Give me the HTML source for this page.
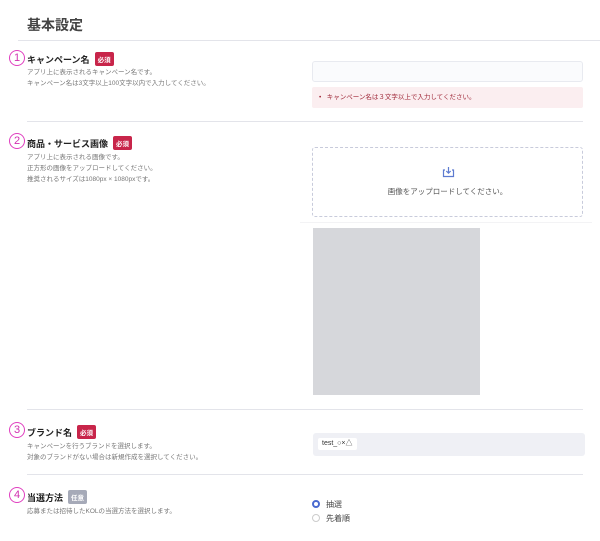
<!DOCTYPE html>
<html><head><meta charset="utf-8"><style>
*{margin:0;padding:0;box-sizing:border-box}
body{width:600px;height:541px;background:#fff;font-family:"Liberation Sans","Noto Sans CJK JP",sans-serif;position:relative;overflow:hidden;color:#333}
.a{position:absolute}
.title{left:27px;top:15px;font-size:14px;font-weight:bold;color:#444}
.hr{height:1px;background:#e3e4ea}
.num{width:16px;height:16px;border:1px solid #e040c0;border-radius:50%;color:#d030b0;font-size:11px;text-align:center;line-height:14px}
.h{font-size:9px;font-weight:bold;color:#222;white-space:nowrap}
.badge{display:inline-block;background:#c8254a;color:#fff;font-size:6.5px;padding:2px 3px;border-radius:2px;margin-left:5px;vertical-align:1px}
.badge.g{background:#a6aab8}
.d{font-size:6.5px;color:#777;line-height:11px;white-space:nowrap}
</style></head><body>
<div class="a title">基本設定</div>
<div class="a hr" style="left:18px;top:40px;width:582px"></div>

<div class="a num" style="left:9px;top:50px">1</div>
<div class="a h" style="left:27px;top:52px">キャンペーン名<span class="badge">必須</span></div>
<div class="a d" style="left:27px;top:67px">アプリ上に表示されるキャンペーン名です。<br>キャンペーン名は3文字以上100文字以内で入力してください。</div>
<div class="a" style="left:312px;top:61px;width:271px;height:21px;border:1px solid #e8eaf0;border-radius:3px;background:#fafbfd"></div>
<div class="a" style="left:312px;top:87px;width:271px;height:21px;background:#fbeef0;border-radius:2px;font-size:6.5px;color:#a02a3a;line-height:21px;padding-left:7px">•&nbsp;&nbsp;&nbsp;キャンペーン名は３文字以上で入力してください。</div>
<div class="a hr" style="left:27px;top:121px;width:556px"></div>

<div class="a num" style="left:9px;top:133px">2</div>
<div class="a h" style="left:27px;top:136px">商品・サービス画像<span class="badge">必須</span></div>
<div class="a d" style="left:27px;top:152px">アプリ上に表示される画像です。<br>正方形の画像をアップロードしてください。<br>推奨されるサイズは1080px × 1080pxです。</div>
<div class="a" style="left:312px;top:147px;width:271px;height:70px;border:1px dashed #c8cbdb;border-radius:3px"></div>
<svg class="a" style="left:442px;top:166px" width="13" height="12" viewBox="0 0 13 12"><path d="M3 4H1.5v6.5h10V4H10" fill="none" stroke="#5d7bd0" stroke-width="1.2"/><path d="M6.5 1v6M4.3 5l2.2 2.2L8.7 5" fill="none" stroke="#5d7bd0" stroke-width="1.2"/></svg>
<div class="a" style="left:312px;top:186px;width:271px;text-align:center;font-size:7.5px;color:#555">画像をアップロードしてください。</div>
<div class="a" style="left:300px;top:222px;width:292px;height:1px;background:#f3f3f5"></div>
<div class="a" style="left:313px;top:228px;width:167px;height:167px;background:#d6d7db"></div>
<div class="a hr" style="left:27px;top:409px;width:556px"></div>

<div class="a num" style="left:9px;top:422px">3</div>
<div class="a h" style="left:27px;top:425px">ブランド名<span class="badge">必須</span></div>
<div class="a d" style="left:27px;top:441px">キャンペーンを行うブランドを選択します。<br>対象のブランドがない場合は新規作成を選択してください。</div>
<div class="a" style="left:313px;top:433px;width:272px;height:23px;background:#eff0f5;border-radius:3px"></div>
<div class="a" style="left:318px;top:438px;height:12px;padding:0 4px;background:#fff;border-radius:2px;font-size:7px;line-height:12px;color:#333">test_○×△</div>
<div class="a hr" style="left:27px;top:474px;width:556px"></div>

<div class="a num" style="left:9px;top:487px">4</div>
<div class="a h" style="left:27px;top:490px">当選方法<span class="badge g">任意</span></div>
<div class="a d" style="left:27px;top:506px">応募または招待したKOLの当選方法を選択します。</div>
<div class="a" style="left:312px;top:500px;width:8px;height:8px;border-radius:50%;border:2.5px solid #4a6ad0;background:#fff"></div>
<div class="a" style="left:326px;top:499px;font-size:8px;color:#444">抽選</div>
<div class="a" style="left:312px;top:514px;width:8px;height:8px;border-radius:50%;border:1px solid #ccc"></div>
<div class="a" style="left:326px;top:513px;font-size:8px;color:#444">先着順</div>
</body></html>
